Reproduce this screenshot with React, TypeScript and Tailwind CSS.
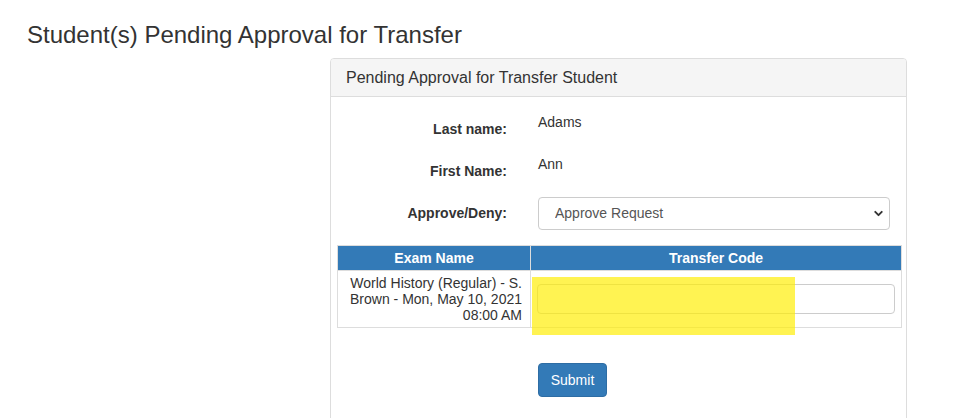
import { ChevronDown } from "lucide-react";

const App = () => {
  return (
    <div className="relative h-[418px] overflow-hidden bg-white font-['Liberation_Sans',Arial,sans-serif] text-[14px] text-[#333]">
      <h3 className="pl-[27px] pt-[22px] text-[24px] leading-[26px]">
        Student(s) Pending Approval for Transfer
      </h3>

      {/* Panel */}
      <div className="ml-[330px] mt-[10px] h-[600px] w-[577px] rounded-t-[4px] border border-[#ddd]">
        <div className="h-[38px] rounded-t-[3px] border-b border-[#ddd] bg-[#f5f5f5] px-[15px] py-[10px] text-[16px] leading-[17px]">
          Pending Approval for Transfer Student
        </div>

        <div className="pt-[15px]">
          <div className="mb-[8px] flex h-[34px]">
            <div className="w-[176px] text-right font-bold leading-[34px]">Last name:</div>
            <div className="ml-[31px] leading-[20px]">Adams</div>
          </div>
          <div className="mb-[8px] flex h-[34px]">
            <div className="w-[176px] text-right font-bold leading-[34px]">First Name:</div>
            <div className="ml-[31px] leading-[20px]">Ann</div>
          </div>
          <div className="flex h-[34px] items-center">
            <div className="w-[176px] text-right font-bold">Approve/Deny:</div>
            <div className="relative ml-[31px] h-[33px] w-[352px]">
              <select
                className="h-full w-full appearance-none rounded-[4px] border border-[#ccc] bg-white pl-[16px] text-[14px] text-[#555]"
                defaultValue="approve"
              >
                <option value="approve">Approve Request</option>
                <option value="deny">Deny Request</option>
              </select>
              <ChevronDown
                className="pointer-events-none absolute right-[5px] top-[10px] text-[#333]"
                size={13}
                strokeWidth={3.5}
              />
            </div>
          </div>

          {/* Exam table */}
          <div className="ml-[6px] mr-[4px] mt-[15px] border border-[#ddd]">
            <div className="flex h-[24px] items-center bg-[#337ab7] font-bold text-white">
              <div className="flex h-full w-[193px] items-center justify-center border-r border-[#ddd]">
                Exam Name
              </div>
              <div className="flex-1 text-center">Transfer Code</div>
            </div>
            <div className="flex border-t border-[#ddd]">
              <div className="w-[193px] border-r border-[#ddd] px-[8px] py-[4px] text-right leading-[16px]">
                World History (Regular) - S. Brown - Mon, May 10, 2021 08:00 AM
              </div>
              <div className="flex flex-1 items-center px-[6px]">
                <input
                  type="text"
                  className="h-[30px] w-full rounded-[4px] border border-[#ccc] bg-white"
                />
              </div>
            </div>
          </div>

          <button className="ml-[207px] mt-[35px] h-[34px] w-[69px] rounded-[4px] border border-[#2e6da4] bg-[#337ab7] text-[14px] text-white">
            Submit
          </button>
        </div>
      </div>

      {/* highlight annotation */}
      <div className="pointer-events-none absolute left-[532px] top-[277px] h-[58px] w-[263px] bg-[rgba(255,238,0,0.68)]" />
    </div>
  );
};

export default App;
